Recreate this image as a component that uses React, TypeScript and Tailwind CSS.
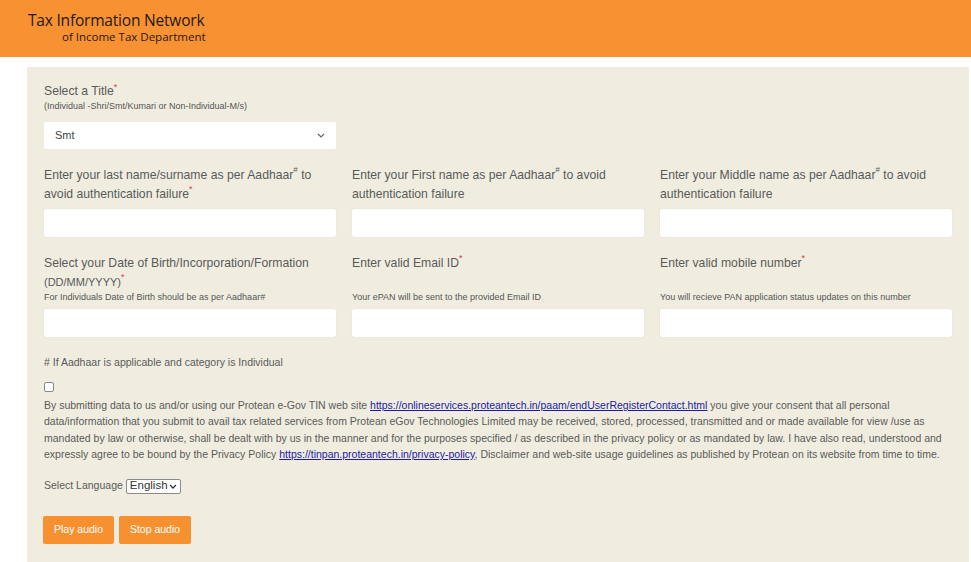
import React from "react";

const Star = () => <span className="text-[#d9363e] text-[9px] leading-none align-top">*</span>;
const Hash = () => <span className="text-[8px] leading-none align-top">#</span>;

const Field = ({ label, hint }: { label: React.ReactNode; hint?: string }) => (
  <div className="flex flex-col">
    <div className="min-h-[37px] text-[12.2px] leading-[18.5px] text-[#5a5a5a]">{label}</div>
    {hint !== undefined && <div className="h-[12px] text-[9px] leading-[12px] text-[#555]">{hint}</div>}
    <div className="mt-[6px] h-[28px] bg-white rounded-[2px] shadow-[0_0_1px_rgba(0,0,0,0.15)]" />
  </div>
);

export default function App() {
  return (
    <div className="w-[971px] h-[562px] overflow-hidden bg-white" style={{ fontFamily: '"Liberation Sans", Arial, sans-serif' }}>
      {/* header */}
      <div className="h-[57px] bg-[#f89132] pl-[28px] pt-[10px]" style={{ fontFamily: '"Open Sans", sans-serif' }}>
        <div className="text-[15.5px] leading-[20px] text-[#1e1a17] tracking-[-0.2px]">Tax Information Network</div>
        <div className="pl-[34px] -mt-[1px] text-[11.5px] leading-[15px] text-[#1e1a17]">of Income Tax Department</div>
      </div>

      <div className="ml-[27px] mr-[2px] mt-[10px] h-[495px] bg-[#f0ede0] px-[17px] pt-[16px]">
        {/* title */}
        <div className="w-[292px]">
          <div className="text-[12.2px] leading-[16px] text-[#5a5a5a]">Select a Title<Star /></div>
          <div className="text-[9px] leading-[14px] text-[#555]">(Individual -Shri/Smt/Kumari or Non-Individual-M/s)</div>
          <div className="mt-[9px] h-[27px] bg-white rounded-[2px] flex items-center justify-between pl-[11px] pr-[11px] text-[11px] text-[#444]">
            <span>Smt</span>
            <svg width="8" height="5" viewBox="0 0 8 5" fill="none" stroke="#666" strokeWidth="1.2"><path d="M1 1l3 3 3-3" /></svg>
          </div>
        </div>

        <div className="mt-[17px] grid grid-cols-3 gap-x-[16px] gap-y-[17px]">
          <Field label={<>Enter your last name/surname as per Aadhaar<Hash /> to avoid authentication failure<Star /></>} />
          <Field label={<>Enter your First name as per Aadhaar<Hash /> to avoid authentication failure</>} />
          <Field label={<>Enter your Middle name as per Aadhaar<Hash /> to avoid authentication failure</>} />
          <Field
            label={<>Select your Date of Birth/Incorporation/Formation <span className="text-[11px]">(DD/MM/YYYY)</span><Star /></>}
            hint="For Individuals Date of Birth should be as per Aadhaar#"
          />
          <Field label={<>Enter valid Email ID<Star /></>} hint="Your ePAN will be sent to the provided Email ID" />
          <Field label={<>Enter valid mobile number<Star /></>} hint="You will recieve PAN application status updates on this number" />
        </div>

        <div className="mt-[17px] text-[10.5px] leading-[16px] text-[#5a5a5a]"># If Aadhaar is applicable and category is Individual</div>

        <div className="mt-[12px] w-[10px] h-[10px] border border-[#8a8a8a] rounded-[2px] bg-white" />

        <p className="mt-[5px] text-[10.5px] leading-[16.3px] text-[#5a5a5a] pr-[4px]">
          By submitting data to us and/or using our Protean e-Gov TIN web site{" "}
          <a className="text-[#1a1aa6] underline">https://onlineservices.proteantech.in/paam/endUserRegisterContact.html</a> you give your
          consent that all personal data/information that you submit to avail tax related services from Protean eGov Technologies Limited may be
          received, stored, processed, transmitted and or made available for view /use as mandated by law or otherwise, shall be dealt with by us
          in the manner and for the purposes specified / as described in the privacy policy or as mandated by law. I have also read, understood and
          expressly agree to be bound by the Privacy Policy{" "}
          <a className="text-[#1a1aa6] underline">https://tinpan.proteantech.in/privacy-policy</a>, Disclaimer and web-site usage guidelines as
          published by Protean on its website from time to time.
        </p>

        <div className="mt-[16px] flex items-center gap-[3px] text-[10.5px] text-[#5a5a5a]">
          <span>Select Language</span>
          <div className="h-[15px] w-[55px] border border-[#8a8a8a] rounded-[2px] bg-white flex items-center justify-between px-[3px] text-[11.5px] text-[#333]">
            <span>English</span>
            <svg width="8" height="5" viewBox="0 0 8 5" fill="none" stroke="#333" strokeWidth="1.3"><path d="M1 1l3 3 3-3" /></svg>
          </div>
        </div>

        <div className="mt-[22px] flex gap-[5px] -ml-[1px]">
          <button className="h-[28px] w-[71px] bg-[#f7912f] text-white text-[10.5px] rounded-[2px]">Play audio</button>
          <button className="h-[28px] w-[72px] bg-[#f7912f] text-white text-[10.5px] rounded-[2px]">Stop audio</button>
        </div>
      </div>
    </div>
  );
}
